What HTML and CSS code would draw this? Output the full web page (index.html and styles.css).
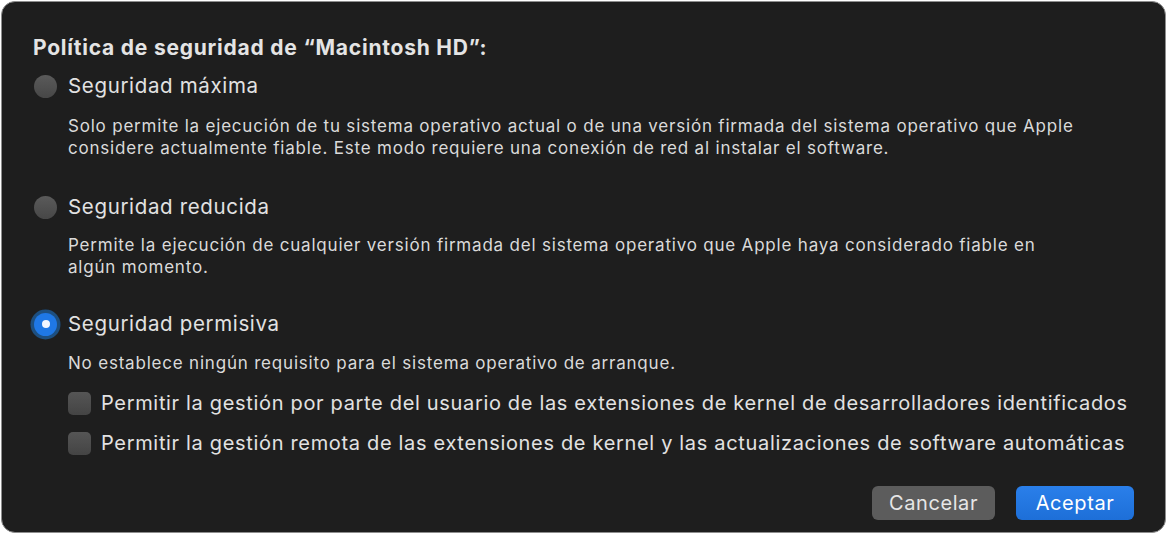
FILE: index.html
```html
<!DOCTYPE html>
<html lang="es">
<head>
<meta charset="utf-8">
<title>Política de seguridad</title>
<link rel="stylesheet" href="styles.css">
</head>
<body>
<div class="window">
  <div class="title">Política de seguridad de “Macintosh HD”:</div>

  <div class="option opt1">
    <span class="radio"></span>
    <span class="label">Seguridad máxima</span>
  </div>
  <p class="desc desc1">Solo permite la ejecución de tu sistema operativo actual o de una versión firmada del sistema operativo que Apple<br>considere actualmente fiable. Este modo requiere una conexión de red al instalar el software.</p>

  <div class="option opt2">
    <span class="radio"></span>
    <span class="label">Seguridad reducida</span>
  </div>
  <p class="desc desc2">Permite la ejecución de cualquier versión firmada del sistema operativo que Apple haya considerado fiable en<br>algún momento.</p>

  <div class="option opt3">
    <span class="radio selected"><span class="dot"></span></span>
    <span class="label">Seguridad permisiva</span>
  </div>
  <p class="desc desc3">No establece ningún requisito para el sistema operativo de arranque.</p>

  <div class="check check1">
    <span class="box"></span>
    <span class="label">Permitir la gestión por parte del usuario de las extensiones de kernel de desarrolladores identificados</span>
  </div>
  <div class="check check2">
    <span class="box"></span>
    <span class="label">Permitir la gestión remota de las extensiones de kernel y las actualizaciones de software automáticas</span>
  </div>

  <div class="buttons">
    <button class="btn cancel">Cancelar</button>
    <button class="btn ok">Aceptar</button>
  </div>
</div>
</body>
</html>
```

FILE: styles.css
```css
html, body {
  margin: 0;
  padding: 0;
  background: #ffffff;
}
body {
  padding: 1px;
  font-family: Inter, "Noto Sans", "Liberation Sans", sans-serif;
}
.window {
  box-sizing: border-box;
  width: 1165px;
  height: 532px;
  background: #1e1e1e;
  border: 1px solid #8e8e8e;
  border-radius: 14px;
  padding: 35px 31px 12px 31px;
  display: flex;
  flex-direction: column;
  color: #e2e2e2;
}
.title {
  font-size: 21px;
  font-weight: 700;
  line-height: 22px;
  letter-spacing: 0.78px;
  color: #e4e4e4;
}
.option {
  display: flex;
  align-items: center;
  height: 24px;
  font-size: 20.5px;
  line-height: 24px;
  letter-spacing: 0.65px;
}
.opt1 { margin-top: 15px; }
.opt2 { margin-top: 36px; }
.opt3 { margin-top: 34px; }
.radio {
  box-sizing: border-box;
  width: 23px;
  height: 23px;
  border-radius: 50%;
  background: linear-gradient(#5a5a5a, #474747);
  margin-left: 1px;
  margin-right: 11px;
  flex: none;
  display: flex;
  align-items: center;
  justify-content: center;
}
.radio.selected {
  background: #1f78e6;
  box-shadow: 0 0 0 3.5px #1d4f80;
}
.dot {
  width: 8px;
  height: 8px;
  border-radius: 50%;
  background: #f2f6ff;
}
.label { color: #e2e2e2; }
.desc {
  margin: 0;
  padding-left: 35px;
  font-size: 17px;
  line-height: 22px;
  letter-spacing: 0.8px;
  color: #dadada;
}
.desc1 { margin-top: 17px; }
.desc2 { margin-top: 15px; }
.desc3 { margin-top: 16px; }
.check {
  display: flex;
  align-items: center;
  height: 24px;
  padding-left: 35px;
  font-size: 20px;
  line-height: 24px;
  letter-spacing: 0.67px;
}
.check1 { margin-top: 17px; }
.check2 { margin-top: 16px; }
.box {
  box-sizing: border-box;
  width: 23px;
  height: 23px;
  border-radius: 5px;
  background: linear-gradient(#555555, #444444);
  margin-right: 10px;
  flex: none;
}
.buttons {
  margin-top: auto;
  display: flex;
  justify-content: flex-end;
  gap: 21px;
}
.btn {
  font-family: inherit;
  font-size: 20px;
  letter-spacing: 0.6px;
  height: 34px;
  border: none;
  border-radius: 6px;
  padding: 0;
  line-height: 34px;
}
.cancel {
  width: 123px;
  background: #5c5c5c;
  color: #e6e6e6;
}
.ok {
  width: 118px;
  background: linear-gradient(#2a7fea, #1d6fd8);
  color: #ffffff;
}
```
